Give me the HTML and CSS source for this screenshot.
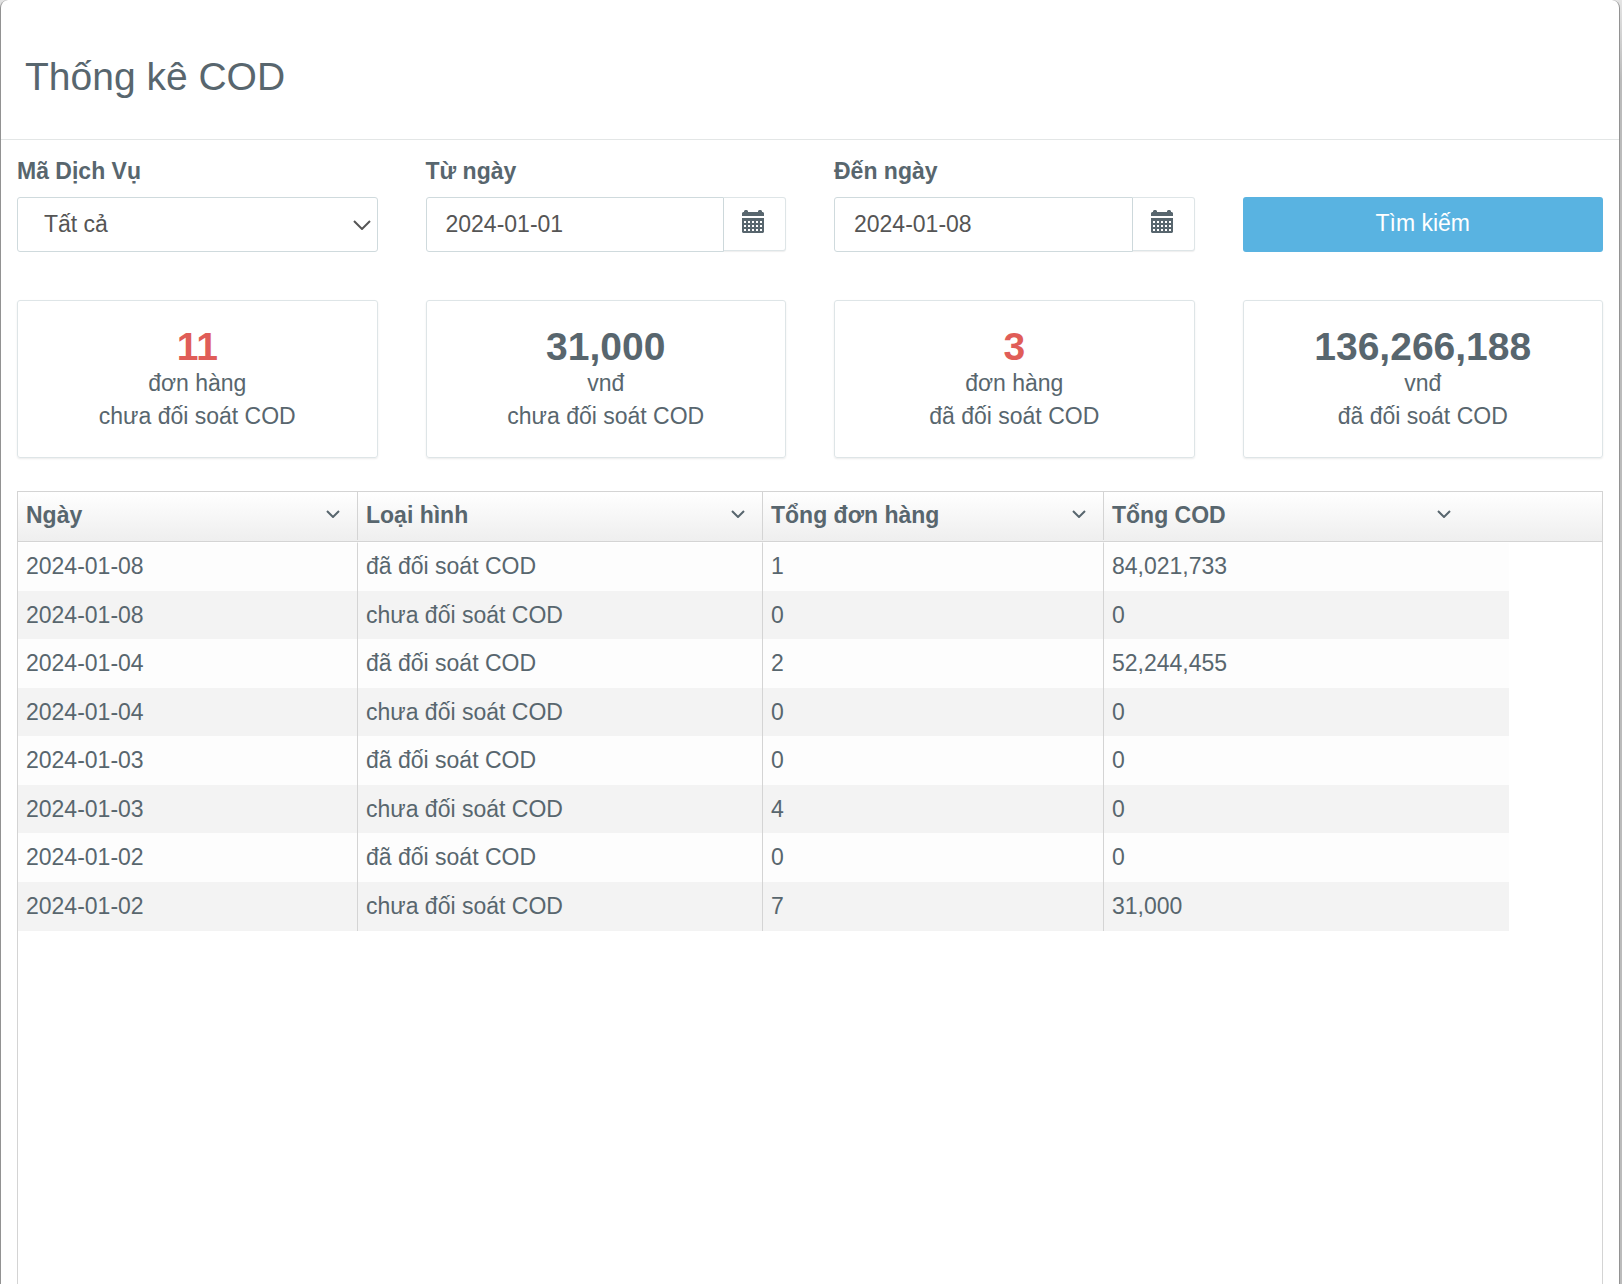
FILE: index.html
```html
<!DOCTYPE html>
<html lang="vi">
<head>
<meta charset="utf-8">
<meta name="viewport" content="width=device-width, initial-scale=1">
<title>Thống kê COD</title>
<link rel="stylesheet" href="styles.css">
</head>
<body>
<svg class="sprite" aria-hidden="true">
  <symbol id="chevron" viewBox="0 0 14 8"><path d="M1 1l6 6 6-6" fill="none" stroke="currentColor" stroke-width="2"/></symbol>
  <symbol id="chevron-thin" viewBox="0 0 18 10"><path d="M1 1l8 8 8-8" fill="none" stroke="currentColor" stroke-width="2"/></symbol>
  <symbol id="calendar" viewBox="0 0 22 24">
    <path fill="currentColor" fill-rule="evenodd" d="M0 6V3l1-1h1V1l1-1h2l1 1v1h10V1l1-1h2l1 1v1h1l1 1v3zM0 8h22v14l-1 1H1l-1-1zM2 11v2h2v-2zM6 11v2h2v-2zM10 11v2h2v-2zM14 11v2h2v-2zM18 11v2h2v-2zM2 15v2h2v-2zM6 15v2h2v-2zM10 15v2h2v-2zM14 15v2h2v-2zM18 15v2h2v-2zM2 19v2h2v-2zM6 19v2h2v-2zM10 19v2h2v-2zM14 19v2h2v-2zM18 19v2h2v-2z"/>
  </symbol>
</svg>
<main class="dialog">
  <header class="dialog-header"><h1>Thống kê COD</h1></header>
  <div class="dialog-body">
    <form class="columns">
      <div class="field">
        <label for="service">Mã Dịch Vụ</label>
        <div class="select">
          <select id="service"><option>Tất cả</option></select>
          <svg class="select-arrow" aria-hidden="true"><use href="#chevron-thin"/></svg>
        </div>
      </div>
      <div class="field">
        <label for="from">Từ ngày</label>
        <div class="date">
          <input id="from" type="text" value="2024-01-01">
          <button type="button" aria-label="Từ ngày"><svg aria-hidden="true"><use href="#calendar"/></svg></button>
        </div>
      </div>
      <div class="field">
        <label for="to">Đến ngày</label>
        <div class="date">
          <input id="to" type="text" value="2024-01-08">
          <button type="button" aria-label="Đến ngày"><svg aria-hidden="true"><use href="#calendar"/></svg></button>
        </div>
      </div>
      <button class="search" type="submit">Tìm kiếm</button>
    </form>

    <section class="columns stats">
      <div class="card"><strong class="danger">11</strong><span>đơn hàng</span><span>chưa đối soát COD</span></div>
      <div class="card"><strong>31,000</strong><span>vnđ</span><span>chưa đối soát COD</span></div>
      <div class="card"><strong class="danger">3</strong><span>đơn hàng</span><span>đã đối soát COD</span></div>
      <div class="card"><strong>136,266,188</strong><span>vnđ</span><span>đã đối soát COD</span></div>
    </section>

    <div class="grid">
      <table>
        <colgroup><col class="col-date"><col class="col-type"><col class="col-count"><col class="col-total"><col></colgroup>
        <thead>
          <tr>
            <th scope="col"><div class="head">Ngày<button type="button" aria-label="Ngày"><svg aria-hidden="true"><use href="#chevron"/></svg></button></div></th>
            <th scope="col"><div class="head">Loại hình<button type="button" aria-label="Loại hình"><svg aria-hidden="true"><use href="#chevron"/></svg></button></div></th>
            <th scope="col"><div class="head">Tổng đơn hàng<button type="button" aria-label="Tổng đơn hàng"><svg aria-hidden="true"><use href="#chevron"/></svg></button></div></th>
            <th scope="col"><div class="head head-last">Tổng COD<button type="button" aria-label="Tổng COD"><svg aria-hidden="true"><use href="#chevron"/></svg></button></div></th>
            <th></th>
          </tr>
        </thead>
        <tbody>
          <tr><td>2024-01-08</td><td>đã đối soát COD</td><td>1</td><td>84,021,733</td></tr>
          <tr><td>2024-01-08</td><td>chưa đối soát COD</td><td>0</td><td>0</td></tr>
          <tr><td>2024-01-04</td><td>đã đối soát COD</td><td>2</td><td>52,244,455</td></tr>
          <tr><td>2024-01-04</td><td>chưa đối soát COD</td><td>0</td><td>0</td></tr>
          <tr><td>2024-01-03</td><td>đã đối soát COD</td><td>0</td><td>0</td></tr>
          <tr><td>2024-01-03</td><td>chưa đối soát COD</td><td>4</td><td>0</td></tr>
          <tr><td>2024-01-02</td><td>đã đối soát COD</td><td>0</td><td>0</td></tr>
          <tr><td>2024-01-02</td><td>chưa đối soát COD</td><td>7</td><td>31,000</td></tr>
        </tbody>
      </table>
    </div>
  </div>
</main>
</body>
</html>
```
FILE: styles.css
```css
* { box-sizing: border-box; }

body {
  margin: 0;
  background: linear-gradient(#e4e4e4, #bbb 80px);
  color: #58666e;
  font: 23px/33px "Liberation Sans", Arial, sans-serif;
}

.sprite { display: none; }

button, input, select { font: inherit; color: inherit; }
button { cursor: pointer; }

.dialog {
  display: flex;
  flex-direction: column;
  min-height: 100vh;
  margin-right: 2px;
  border: solid #929292;
  border-width: 0 1px;
  border-radius: 8px 8px 0 0;
  background: #fff;
}

.dialog-header {
  padding: 48px 24px 34px;
  border-bottom: 1px solid #e3e6e6;
}

h1 {
  margin: 0;
  font-size: 39px;
  font-weight: 400;
  line-height: 57px;
}

.dialog-body {
  display: flex;
  flex: 1;
  flex-direction: column;
  padding: 15px 16px 0;
}

.columns {
  display: grid;
  grid-template-columns: repeat(4, minmax(0, 1fr));
  column-gap: 48px;
  align-items: end;
}

.field {
  display: flex;
  flex-direction: column;
  gap: 9px;
}

label { font-weight: 700; }

.select { display: grid; align-items: center; }
.select > * { grid-area: 1 / 1; }

select, input {
  min-width: 0;
  width: 100%;
  height: 55px;
  border: 1px solid #cfdadd;
  border-radius: 3px;
  background: #fff;
  color: #555;
}

select { padding: 0 26px; appearance: none; }

.select-arrow {
  justify-self: end;
  width: 18px;
  height: 10px;
  margin-right: 7px;
  color: #555;
  pointer-events: none;
}

.date { display: flex; align-items: flex-start; }

input {
  flex: 1;
  padding: 0 19px;
  border-radius: 3px 0 0 3px;
}

.date button {
  display: flex;
  align-items: center;
  justify-content: center;
  width: 62px;
  height: 54px;
  padding: 0 3px 4px 0;
  border: 1px solid #dee5e7;
  border-left: 0;
  border-radius: 0 3px 3px 0;
  background: #fff;
  box-shadow: 0 1px 1px rgba(90, 90, 90, .1);
}

.date svg { width: 22px; height: 24px; }

.search {
  height: 55px;
  padding: 0 0 2px;
  border: 0;
  border-radius: 3px;
  background: #59b3e1;
  color: #fff;
}

.stats { margin-top: 48px; }

.card {
  display: flex;
  flex-direction: column;
  padding: 26px 16px 24px;
  border: 1px solid #dee5e7;
  border-radius: 3px;
  box-shadow: 0 1px 2px rgba(0, 0, 0, .08);
  text-align: center;
}

.card strong { font-size: 39px; line-height: 40px; }
.danger { color: #e05d58; }

.grid {
  flex: 1;
  margin-top: 33px;
  border: 1px solid #d4d4d4;
  border-bottom: 0;
}

table {
  width: 100%;
  border-spacing: 0;
  table-layout: fixed;
}

.col-date { width: 340px; }
.col-type { width: 405px; }
.col-count { width: 341px; }
.col-total { width: 405px; }

thead tr { background: linear-gradient(#fff, #eee); }

th {
  padding: 0 0 1px;
  border-bottom: 1px solid #d4d4d4;
  text-align: left;
}

.head {
  display: flex;
  align-items: center;
  justify-content: space-between;
  height: 48px;
  padding: 0 17px 2px 8px;
  border-right: 1px solid #d4d4d4;
}

.head-last { padding-right: 58px; border-right: 0; }

.head button {
  display: flex;
  padding: 0 0 3px;
  border: 0;
  background: none;
}

.head svg { width: 14px; height: 8px; }

td {
  height: 49px;
  padding: 0 8px;
  border-right: 1px solid #d4d4d4;
  background: #fdfdfd;
}

td:last-child { border-right: 0; }
tbody tr:nth-child(even) td { height: 48px; background: #f3f3f3; }
tbody tr:first-child td { padding-bottom: 2px; border-top: 1px solid #fff; }
tbody tr:last-child td { height: 49px; }
```
